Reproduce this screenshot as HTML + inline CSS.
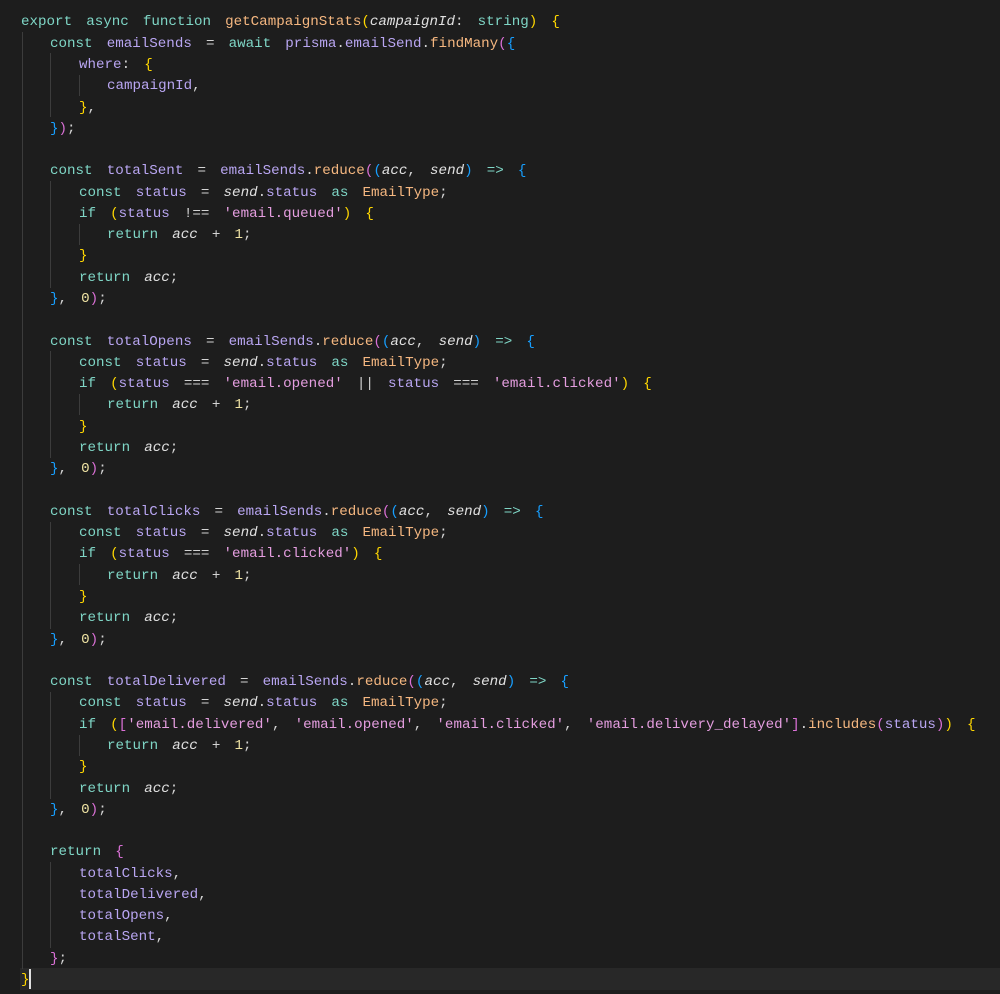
<!DOCTYPE html>
<html><head><meta charset="utf-8"><style>
html,body{margin:0;padding:0;background:#1d1d1d;width:1000px;height:994px;overflow:hidden}
#c{position:absolute;left:0;top:12.4px;font-family:"Liberation Mono",monospace;font-size:14.2px;word-spacing:5.6px;color:#d4d4d4}
.l{height:21.29px;line-height:21.29px;padding-left:21px;white-space:pre}
.i1{padding-left:50px}.i2{padding-left:79px}.i3{padding-left:107px}
.k{color:#7fd6c6}.v{color:#b9a6f2}.f{color:#f5b780}.s{color:#e59ee0}.n{color:#efe3a4}.p{font-style:italic;color:#e0e0e0}
.y{color:#ffd700}.m{color:#da70d6}.b{color:#179fff}
.g{position:absolute;width:1px;background:#3c3c3c}
#hl{position:absolute;left:20px;top:968px;width:980px;height:22px;background:#282828}
#cur{position:absolute;left:29px;top:969px;width:2px;height:20px;background:#e0e0e0}
</style></head><body>
<div id="hl"></div>
<div class="g" style="left:22px;top:32px;height:937px"></div>
<div class="g" style="left:50px;top:53px;height:64px"></div>
<div class="g" style="left:79px;top:75px;height:21px"></div>
<div class="g" style="left:50px;top:181px;height:107px"></div>
<div class="g" style="left:79px;top:224px;height:21px"></div>
<div class="g" style="left:50px;top:351px;height:107px"></div>
<div class="g" style="left:79px;top:394px;height:21px"></div>
<div class="g" style="left:50px;top:522px;height:107px"></div>
<div class="g" style="left:79px;top:564px;height:21px"></div>
<div class="g" style="left:50px;top:692px;height:107px"></div>
<div class="g" style="left:79px;top:735px;height:21px"></div>
<div class="g" style="left:50px;top:862px;height:86px"></div>
<div id="c">
<div class="l"><span class="k">export async function</span> <span class="f">getCampaignStats</span><span class="y">(</span><span class="p">campaignId</span>: <span class="k">string</span><span class="y">)</span> <span class="y">{</span></div>
<div class="l i1"><span class="k">const</span> <span class="v">emailSends</span> = <span class="k">await</span> <span class="v">prisma</span>.<span class="v">emailSend</span>.<span class="f">findMany</span><span class="m">(</span><span class="b">{</span></div>
<div class="l i2"><span class="v">where</span>: <span class="y">{</span></div>
<div class="l i3"><span class="v">campaignId</span>,</div>
<div class="l i2"><span class="y">}</span>,</div>
<div class="l i1"><span class="b">}</span><span class="m">)</span>;</div>
<div class="l"> </div>
<div class="l i1"><span class="k">const</span> <span class="v">totalSent</span> = <span class="v">emailSends</span>.<span class="f">reduce</span><span class="m">(</span><span class="b">(</span><span class="p">acc</span>, <span class="p">send</span><span class="b">)</span> <span class="k">=&gt;</span> <span class="b">{</span></div>
<div class="l i2"><span class="k">const</span> <span class="v">status</span> = <span class="p">send</span>.<span class="v">status</span> <span class="k">as</span> <span class="f">EmailType</span>;</div>
<div class="l i2"><span class="k">if</span> <span class="y">(</span><span class="v">status</span> !== <span class="s">'email.queued'</span><span class="y">)</span> <span class="y">{</span></div>
<div class="l i3"><span class="k">return</span> <span class="p">acc</span> + <span class="n">1</span>;</div>
<div class="l i2"><span class="y">}</span></div>
<div class="l i2"><span class="k">return</span> <span class="p">acc</span>;</div>
<div class="l i1"><span class="b">}</span>, <span class="n">0</span><span class="m">)</span>;</div>
<div class="l"> </div>
<div class="l i1"><span class="k">const</span> <span class="v">totalOpens</span> = <span class="v">emailSends</span>.<span class="f">reduce</span><span class="m">(</span><span class="b">(</span><span class="p">acc</span>, <span class="p">send</span><span class="b">)</span> <span class="k">=&gt;</span> <span class="b">{</span></div>
<div class="l i2"><span class="k">const</span> <span class="v">status</span> = <span class="p">send</span>.<span class="v">status</span> <span class="k">as</span> <span class="f">EmailType</span>;</div>
<div class="l i2"><span class="k">if</span> <span class="y">(</span><span class="v">status</span> === <span class="s">'email.opened'</span> || <span class="v">status</span> === <span class="s">'email.clicked'</span><span class="y">)</span> <span class="y">{</span></div>
<div class="l i3"><span class="k">return</span> <span class="p">acc</span> + <span class="n">1</span>;</div>
<div class="l i2"><span class="y">}</span></div>
<div class="l i2"><span class="k">return</span> <span class="p">acc</span>;</div>
<div class="l i1"><span class="b">}</span>, <span class="n">0</span><span class="m">)</span>;</div>
<div class="l"> </div>
<div class="l i1"><span class="k">const</span> <span class="v">totalClicks</span> = <span class="v">emailSends</span>.<span class="f">reduce</span><span class="m">(</span><span class="b">(</span><span class="p">acc</span>, <span class="p">send</span><span class="b">)</span> <span class="k">=&gt;</span> <span class="b">{</span></div>
<div class="l i2"><span class="k">const</span> <span class="v">status</span> = <span class="p">send</span>.<span class="v">status</span> <span class="k">as</span> <span class="f">EmailType</span>;</div>
<div class="l i2"><span class="k">if</span> <span class="y">(</span><span class="v">status</span> === <span class="s">'email.clicked'</span><span class="y">)</span> <span class="y">{</span></div>
<div class="l i3"><span class="k">return</span> <span class="p">acc</span> + <span class="n">1</span>;</div>
<div class="l i2"><span class="y">}</span></div>
<div class="l i2"><span class="k">return</span> <span class="p">acc</span>;</div>
<div class="l i1"><span class="b">}</span>, <span class="n">0</span><span class="m">)</span>;</div>
<div class="l"> </div>
<div class="l i1"><span class="k">const</span> <span class="v">totalDelivered</span> = <span class="v">emailSends</span>.<span class="f">reduce</span><span class="m">(</span><span class="b">(</span><span class="p">acc</span>, <span class="p">send</span><span class="b">)</span> <span class="k">=&gt;</span> <span class="b">{</span></div>
<div class="l i2"><span class="k">const</span> <span class="v">status</span> = <span class="p">send</span>.<span class="v">status</span> <span class="k">as</span> <span class="f">EmailType</span>;</div>
<div class="l i2"><span class="k">if</span> <span class="y">(</span><span class="m">[</span><span class="s">'email.delivered'</span>, <span class="s">'email.opened'</span>, <span class="s">'email.clicked'</span>, <span class="s">'email.delivery_delayed'</span><span class="m">]</span>.<span class="f">includes</span><span class="m">(</span><span class="v">status</span><span class="m">)</span><span class="y">)</span> <span class="y">{</span></div>
<div class="l i3"><span class="k">return</span> <span class="p">acc</span> + <span class="n">1</span>;</div>
<div class="l i2"><span class="y">}</span></div>
<div class="l i2"><span class="k">return</span> <span class="p">acc</span>;</div>
<div class="l i1"><span class="b">}</span>, <span class="n">0</span><span class="m">)</span>;</div>
<div class="l"> </div>
<div class="l i1"><span class="k">return</span> <span class="m">{</span></div>
<div class="l i2"><span class="v">totalClicks</span>,</div>
<div class="l i2"><span class="v">totalDelivered</span>,</div>
<div class="l i2"><span class="v">totalOpens</span>,</div>
<div class="l i2"><span class="v">totalSent</span>,</div>
<div class="l i1"><span class="m">}</span>;</div>
<div class="l"><span class="y">}</span></div>
</div>
<div id="cur"></div>
</body></html>
